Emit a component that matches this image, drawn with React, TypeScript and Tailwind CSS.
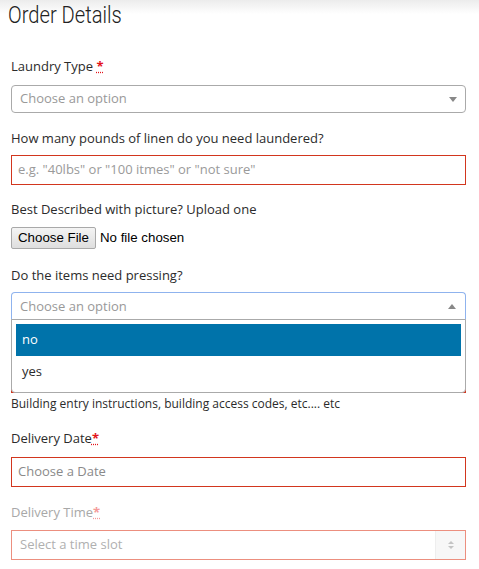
import React from "react";

const Req = ({ faded }: { faded?: boolean }) => (
  <abbr
    title="required"
    className={`font-bold ${faded ? "text-[#f49a9a]" : "text-[#e3141b]"}`}
  >
    *
  </abbr>
);

const Caret = ({ up }: { up?: boolean }) =>
  up ? (
    <span className="h-0 w-0 border-x-4 border-b-[5px] border-x-transparent border-b-[#888]" />
  ) : (
    <span className="h-0 w-0 border-x-4 border-t-[5px] border-x-transparent border-t-[#888]" />
  );

const App = () => {
  return (
    <div className="min-h-screen bg-white font-['Open_Sans',sans-serif] text-[13px] text-[#2b2b2b]">
      {/* header */}
      <div className="bg-[linear-gradient(#ececec,#ffffff_14px)] pl-2 pt-px">
        <h1 className="inline-block origin-left scale-x-[0.84] font-['Roboto',sans-serif] text-[24px] leading-[28px] font-light text-[#222]">
          Order Details
        </h1>
      </div>

      <form className="flex flex-col pl-[11px] pr-[13px] pt-[28px]">
        {/* Laundry type */}
        <label className="leading-[18px]">
          Laundry Type <Req />
        </label>
        <div className="mt-[10px] flex h-[28px] items-center justify-between rounded-[4px] border border-[#aaa] pl-[8px] pr-[8px]">
          <span className="text-[#999]">Choose an option</span>
          <Caret />
        </div>

        <label className="mt-[16px] leading-[18px]">How many pounds of linen do you need laundered?</label>
        <div className="mt-[8px] flex h-[30px] items-center border border-[#d2361e] pl-[6px]">
          <span className="text-[#9a9a9a]">e.g. "40lbs" or "100 itmes" or "not sure"</span>
        </div>

        <label className="mt-[15px] leading-[18px]">Best Described with picture? Upload one</label>
        <div className="mt-[9px] flex items-center gap-[4px] font-['Liberation_Sans',Arial,sans-serif] text-[13.3px] text-black">
          <span className="flex h-[22px] items-center rounded-[2px] border border-[#a9a9a9] bg-[linear-gradient(#f4f4f4,#dedede)] px-[6px]">
            Choose File
          </span>
          <span>No file chosen</span>
        </div>

        <label className="mt-[17px] leading-[18px]">Do the items need pressing?</label>
        <div className="relative mt-[8px]">
          <div className="flex h-[28px] items-center justify-between rounded-t-[4px] border border-b-[#aaa] border-x-[#8fb3ee] border-t-[#8fb3ee] pl-[8px] pr-[9px] pt-px">
            <span className="text-[#999]">Choose an option</span>
            <Caret up />
          </div>
          {/* open dropdown */}
          <ul className="absolute left-0 right-0 top-[27px] z-10 rounded-b-[4px] border border-[#aaa] bg-white p-[4px]">
            <li className="flex h-[32px] items-center bg-[#0073aa] pl-[6px] text-white">no</li>
            <li className="flex h-[32px] items-center pl-[6px]">yes</li>
          </ul>
        </div>

        {/* field covered by the open dropdown */}
        <div className="mt-[16px] h-[18px]" />
        <div className="mt-[9px] h-[30px] border border-[#d2361e]" />
        <p className="mt-[2px] text-[12px] leading-[17px]">
          Building entry instructions, building access codes, etc.... etc
        </p>

        <label className="mt-[17px] leading-[18px]">
          Delivery Date<Req />
        </label>
        <div className="mt-[10px] flex h-[30px] items-center border border-[#d2361e] pl-[6px]">
          <span className="text-[#8a8a8a]">Choose a Date</span>
        </div>

        <label className="mt-[16px] leading-[18px] text-[#a8a8a8]">
          Delivery Time<Req faded />
        </label>
        <div className="mt-[9px] flex h-[30px] items-stretch border border-[#ec8f7f]">
          <span className="flex flex-1 items-center pl-[8px] text-[#b0b0b0]">Select a time slot</span>
          <span className="flex w-[30px] flex-col items-center justify-center gap-[2px] border-l border-[#eee] bg-[#f7f7f7]">
            <span className="h-0 w-0 border-x-[3px] border-b-[3px] border-x-transparent border-b-[#c4c4c4]" />
            <span className="h-0 w-0 border-x-[3px] border-t-[3px] border-x-transparent border-t-[#c4c4c4]" />
          </span>
        </div>
        <div className="h-6" />
      </form>
    </div>
  );
};

export default App;
